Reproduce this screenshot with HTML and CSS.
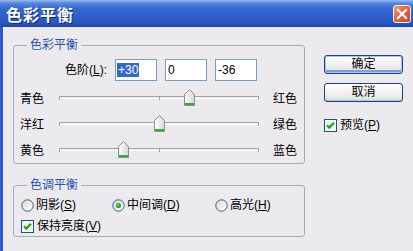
FILE: index.html
```html
<!DOCTYPE html>
<html lang="zh-CN">
<head>
<meta charset="utf-8">
<title>色彩平衡</title>
<link rel="stylesheet" href="styles.css">
</head>
<body>
<div class="window">
  <div class="titlebar">
    <span class="title">色彩平衡</span>
    <span class="close"><svg width="16" height="16" viewBox="0 0 16 16"><path d="M4 4 L12 12 M12 4 L4 12" stroke="#fff" stroke-width="2.2" stroke-linecap="square"/></svg></span>
  </div>
  <div class="client">
    <div class="main">
      <fieldset class="group group-color">
        <legend>色彩平衡</legend>
        <div class="levels">
          <span class="levels-label">色阶(<u>L</u>):</span>
          <span class="field"><span class="sel">+30</span></span>
          <span class="field">0</span>
          <span class="field">-36</span>
        </div>
        <div class="slider-row">
          <span class="lbl">青色</span>
          <div class="slider">
            <div class="track"><i class="tick t0"></i><i class="tick t1"></i><i class="tick t2"></i></div>
            <span class="thumb" style="left:130px"><svg width="11" height="17" viewBox="0 0 11 17"><defs><linearGradient id="tg1" x1="0" y1="0" x2="1" y2="0"><stop offset="0" stop-color="#fff"/><stop offset="1" stop-color="#D6D6DA"/></linearGradient></defs><path d="M0.5 5.5 L5.5 0.5 L10.5 5.5 V16.5 H0.5 Z" fill="url(#tg1)" stroke="#8C8E91"/><rect x="1" y="14" width="9" height="2" fill="#2FB32F"/></svg></span>
          </div>
          <span class="lbl rlbl">红色</span>
        </div>
        <div class="slider-row">
          <span class="lbl">洋红</span>
          <div class="slider">
            <div class="track"><i class="tick t0"></i><i class="tick t1"></i><i class="tick t2"></i></div>
            <span class="thumb" style="left:100px"><svg width="11" height="17" viewBox="0 0 11 17"><defs><linearGradient id="tg2" x1="0" y1="0" x2="1" y2="0"><stop offset="0" stop-color="#fff"/><stop offset="1" stop-color="#D6D6DA"/></linearGradient></defs><path d="M0.5 5.5 L5.5 0.5 L10.5 5.5 V16.5 H0.5 Z" fill="url(#tg2)" stroke="#8C8E91"/><rect x="1" y="14" width="9" height="2" fill="#2FB32F"/></svg></span>
          </div>
          <span class="lbl rlbl">绿色</span>
        </div>
        <div class="slider-row">
          <span class="lbl">黄色</span>
          <div class="slider">
            <div class="track"><i class="tick t0"></i><i class="tick t1"></i><i class="tick t2"></i></div>
            <span class="thumb" style="left:64px"><svg width="11" height="17" viewBox="0 0 11 17"><defs><linearGradient id="tg3" x1="0" y1="0" x2="1" y2="0"><stop offset="0" stop-color="#fff"/><stop offset="1" stop-color="#D6D6DA"/></linearGradient></defs><path d="M0.5 5.5 L5.5 0.5 L10.5 5.5 V16.5 H0.5 Z" fill="url(#tg3)" stroke="#8C8E91"/><rect x="1" y="14" width="9" height="2" fill="#2FB32F"/></svg></span>
          </div>
          <span class="lbl rlbl">蓝色</span>
        </div>
      </fieldset>
      <fieldset class="group group-tone">
        <legend>色调平衡</legend>
        <div class="radios">
          <span class="opt"><svg class="radio" width="13" height="13" viewBox="0 0 13 13"><defs><linearGradient id="rg1" x1="0" y1="0" x2="1" y2="1"><stop offset="0" stop-color="#D9D9D4"/><stop offset="1" stop-color="#fff"/></linearGradient></defs><circle cx="6.5" cy="6.5" r="5.7" fill="url(#rg1)" stroke="#3B5E8E"/></svg>阴影(<u>S</u>)</span>
          <span class="opt"><svg class="radio" width="13" height="13" viewBox="0 0 13 13"><defs><linearGradient id="rg2" x1="0" y1="0" x2="1" y2="1"><stop offset="0" stop-color="#D9D9D4"/><stop offset="1" stop-color="#fff"/></linearGradient></defs><circle cx="6.5" cy="6.5" r="5.7" fill="url(#rg2)" stroke="#3B5E8E"/><circle cx="6.5" cy="6.5" r="2.6" fill="#35A935"/><circle cx="6" cy="6" r="1" fill="#7FD27F"/></svg>中间调(<u>D</u>)</span>
          <span class="opt"><svg class="radio" width="13" height="13" viewBox="0 0 13 13"><defs><linearGradient id="rg3" x1="0" y1="0" x2="1" y2="1"><stop offset="0" stop-color="#D9D9D4"/><stop offset="1" stop-color="#fff"/></linearGradient></defs><circle cx="6.5" cy="6.5" r="5.7" fill="url(#rg3)" stroke="#3B5E8E"/></svg>高光(<u>H</u>)</span>
        </div>
        <div class="check"><svg class="box" width="13" height="13" viewBox="0 0 13 13"><rect x="0.5" y="0.5" width="12" height="12" fill="#F6F6F2" stroke="#1C5180"/><path d="M3 6.2 L5.3 8.6 L10 3.8" stroke="#21A121" stroke-width="2.2" fill="none"/></svg>保持亮度(<u>V</u>)</div>
      </fieldset>
    </div>
    <div class="side">
      <div class="btn default">确定</div>
      <div class="btn">取消</div>
      <div class="check preview"><svg class="box" width="13" height="13" viewBox="0 0 13 13"><rect x="0.5" y="0.5" width="12" height="12" fill="#F6F6F2" stroke="#1C5180"/><path d="M3 6.2 L5.3 8.6 L10 3.8" stroke="#21A121" stroke-width="2.2" fill="none"/></svg>预览(<u>P</u>)</div>
    </div>
  </div>
</div>
</body>
</html>
```
FILE: styles.css
```css
* { box-sizing: border-box; }
html, body { margin: 0; padding: 0; }
body {
  width: 413px;
  height: 251px;
  overflow: hidden;
  background: #ECE9EF;
  font: 12px/14px "Liberation Sans", "Noto Sans CJK SC", sans-serif;
  color: #000;
}
.window { height: 251px; display: flex; flex-direction: column; }
.titlebar {
  height: 27px;
  flex: none;
  display: flex;
  align-items: center;
  padding: 0 2px 0 6px;
  background: linear-gradient(to bottom, #9CBCF0 0, #5A8ADF 3px, #3769D2 8px, #2F5FC8 60%, #2853BC 90%, #1F46AA 100%);
}
.title {
  color: #fff;
  font: bold 16px/20px "Noto Sans CJK SC", sans-serif;
  letter-spacing: 1px;
  text-shadow: 1px 1px 0 #10297A;
}
.close {
  margin-left: auto;
  width: 18px;
  height: 18px;
  border: 1px solid #F3F3F3;
  border-radius: 3px;
  background: linear-gradient(135deg, #F0A17F 0, #E26A44 40%, #C9452A 100%);
  display: flex;
  align-items: center;
  justify-content: center;
}
.client {
  flex: 1;
  display: flex;
  border-left: 3px solid #2D5CC8;
  padding: 11px 0 0 10px;
}
.main { width: 292px; display: flex; flex-direction: column; }
.group {
  margin: 0;
  padding: 7px 6px 4px 6px;
  border: 1px solid #ABA9B0;
  border-radius: 3px;
  min-width: 0;
}
.group legend {
  margin-left: 7px;
  padding: 0 3px;
  color: #2753AE;
  line-height: 14px;
}
.group-tone { margin-top: 14px; padding-top: 6px; padding-bottom: 3px; }
.levels { display: flex; align-items: center; height: 22px; }
.levels-label { width: 87px; text-align: right; margin-right: 8px; }
.field {
  width: 42px;
  height: 22px;
  margin-right: 8px;
  border: 1px solid #7F9DB9;
  background: #fff;
  padding: 3px 2px 0 2px;
  line-height: 14px;
}
.sel { background: #316AC5; color: #fff; margin-left: -1px; padding: 0 1px; }
.slider-row { display: flex; height: 19px; margin-top: 7px; }
.lbl { width: 34px; padding-top: 4px; }
.rlbl { width: auto; margin-left: 9px; }
.slider { position: relative; width: 210px; height: 19px; }
.track {
  position: relative;
  margin: 8px 5px 0 5px;
  height: 3px;
  border-top: 1px solid #A2A1A6;
  border-bottom: 1px solid #FFFFFF;
  background: #F3F2F0;
}
.tick { position: absolute; top: -1px; width: 1px; height: 4px; background: #A2A1A6; }
.t0 { left: 0; }
.t1 { left: 100px; }
.t2 { left: 199px; }
.thumb { position: absolute; top: 1px; width: 11px; height: 17px; }
.thumb svg { display: block; }
.radios { display: grid; grid-template-columns: 91px 103px auto; padding-left: 1px; height: 14px; align-items: center; }
.opt { display: flex; align-items: center; }
.radio { display: block; margin-right: 2px; flex: none; }
.check { display: flex; align-items: center; height: 14px; margin-top: 7px; padding-left: 1px; }
.box { display: block; margin-right: 3px; flex: none; }
.side { margin-left: 19px; padding-top: 17px; display: flex; flex-direction: column; }
.btn {
  width: 79px;
  height: 19px;
  border: 1px solid #23407A;
  border-radius: 3px;
  background: linear-gradient(to bottom, #FFFFFF 0, #F4F4F2 40%, #E6E6E4 85%, #C9CFDA 100%);
  box-shadow: inset 0 -1px 0 #B8C4DA;
  text-align: center;
  line-height: 17px;
}
.btn.default { box-shadow: inset 0 0 0 1px #A9C4F0, inset 0 -2px 0 1px #7C9DE0; }
.btn + .btn { margin-top: 9px; }
.preview { margin-top: 16px; padding-left: 0; }
```
